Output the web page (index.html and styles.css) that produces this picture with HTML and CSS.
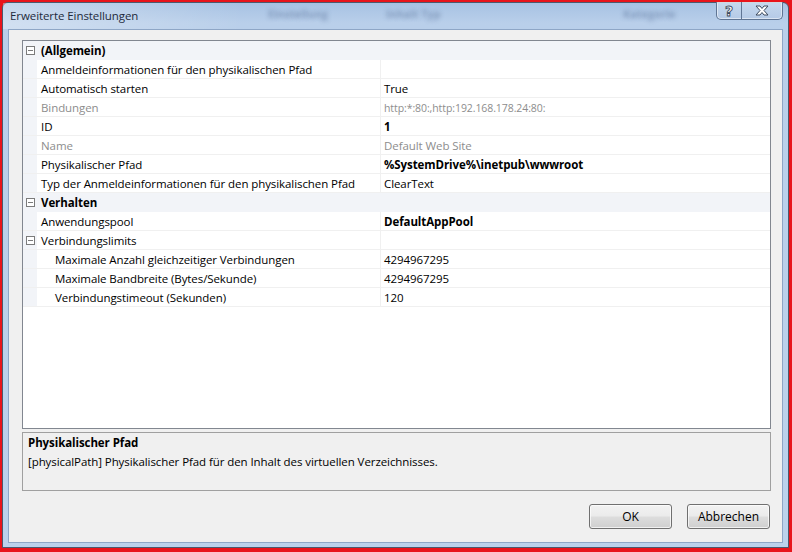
FILE: index.html
```html
<!DOCTYPE html>
<html lang="de">
<head>
    <meta charset="UTF-8">
    <title>Erweiterte Einstellungen</title>
    <link rel="stylesheet" href="styles.css">
</head>
<body>
    <div class="window">
        <div class="titlebar">
            <span class="title">Erweiterte Einstellungen</span>
            <span class="ghost ghost1">Einstellung</span>
            <span class="ghost ghost2">Inhalt Typ</span>
            <span class="ghost ghost3">Kategorie</span>
            <div class="caption-buttons">
                <div class="cap-btn help">
                    <svg width="24" height="17" viewBox="0 0 24 17">
                        <text x="12" y="13.5" text-anchor="middle" class="help-glyph">?</text>
                    </svg>
                </div>
                <div class="cap-btn close">
                    <svg width="40" height="17" viewBox="0 0 40 17">
                        <path d="M14 4 h4 l2 2.5 l2 -2.5 h4 l-4 4.5 l4 4.5 h-4 l-2 -2.5 l-2 2.5 h-4 l4 -4.5 z" fill="#fff" stroke="#3c4a5e" stroke-width="1" stroke-linejoin="round"/>
                    </svg>
                </div>
            </div>
        </div>

        <div class="client">
            <div class="grid">
                <div class="row cat">
                    <div class="gutter"><span class="exp"></span></div>
                    <div class="cat-label">(Allgemein)</div>
                </div>
                <div class="row">
                    <div class="gutter"></div>
                    <div class="name">Anmeldeinformationen für den physikalischen Pfad</div>
                    <div class="value"></div>
                </div>
                <div class="row">
                    <div class="gutter"></div>
                    <div class="name">Automatisch starten</div>
                    <div class="value">True</div>
                </div>
                <div class="row readonly">
                    <div class="gutter"></div>
                    <div class="name">Bindungen</div>
                    <div class="value small">http:*:80:,http:192.168.178.24:80:</div>
                </div>
                <div class="row">
                    <div class="gutter"></div>
                    <div class="name">ID</div>
                    <div class="value bold">1</div>
                </div>
                <div class="row readonly">
                    <div class="gutter"></div>
                    <div class="name">Name</div>
                    <div class="value">Default Web Site</div>
                </div>
                <div class="row">
                    <div class="gutter"></div>
                    <div class="name">Physikalischer Pfad</div>
                    <div class="value bold">%SystemDrive%\inetpub\wwwroot</div>
                </div>
                <div class="row">
                    <div class="gutter"></div>
                    <div class="name">Typ der Anmeldeinformationen für den physikalischen Pfad</div>
                    <div class="value">ClearText</div>
                </div>
                <div class="row cat">
                    <div class="gutter"><span class="exp"></span></div>
                    <div class="cat-label">Verhalten</div>
                </div>
                <div class="row">
                    <div class="gutter"></div>
                    <div class="name">Anwendungspool</div>
                    <div class="value bold">DefaultAppPool</div>
                </div>
                <div class="row">
                    <div class="gutter"><span class="exp"></span></div>
                    <div class="name">Verbindungslimits</div>
                    <div class="value"></div>
                </div>
                <div class="row">
                    <div class="gutter"></div>
                    <div class="name sub">Maximale Anzahl gleichzeitiger Verbindungen</div>
                    <div class="value">4294967295</div>
                </div>
                <div class="row">
                    <div class="gutter"></div>
                    <div class="name sub">Maximale Bandbreite (Bytes/Sekunde)</div>
                    <div class="value">4294967295</div>
                </div>
                <div class="row">
                    <div class="gutter"></div>
                    <div class="name sub">Verbindungstimeout (Sekunden)</div>
                    <div class="value">120</div>
                </div>
            </div>

            <div class="description">
                <div class="desc-title">Physikalischer Pfad</div>
                <div class="desc-text">[physicalPath] Physikalischer Pfad für den Inhalt des virtuellen Verzeichnisses.</div>
            </div>

            <div class="buttons">
                <button class="btn">OK</button>
                <button class="btn">Abbrechen</button>
            </div>
        </div>
    </div>
</body>
</html>
```

FILE: styles.css
```css
body {
    margin: 0;
    height: 552px;
    background-color: #e8141b;
    font-family: "Open Sans", "Noto Sans", sans-serif;
    font-size: 11.5px;
    letter-spacing: -0.08px;
    color: #000;
    overflow: hidden;
}

.window {
    margin: 2px 3px 0 2px;
    height: 546px;
    box-sizing: border-box;
    border: 1px solid #4b5a6e;
    border-radius: 6px 6px 0 0;
    background: linear-gradient(to bottom, #a7c2e3 0%, #b9cfea 20px, #bcd2ec 100%);
    display: flex;
    flex-direction: column;
}

.titlebar {
    position: relative;
    height: 26px;
    flex: none;
    background: linear-gradient(to right, rgba(255,255,255,0.35), rgba(255,255,255,0) 240px);
}

.title {
    position: absolute;
    left: 7px;
    top: 5px;
    color: #1e2b3c;
}

.ghost {
    position: absolute;
    top: 3px;
    color: transparent;
    text-shadow: 0 0 4px rgba(80, 105, 145, 0.45);
    font-weight: bold;
    font-size: 11px;
}
.ghost1 { left: 265px; }
.ghost2 { left: 383px; }
.ghost3 { left: 620px; }

.caption-buttons {
    position: absolute;
    top: -1px;
    right: 5px;
    display: flex;
    border: 1px solid #5f7594;
    border-top: none;
    border-radius: 0 0 5px 5px;
    background: linear-gradient(to bottom, rgba(220,232,246,0.6), rgba(180,200,228,0.5));
    box-shadow: inset 0 0 0 1px rgba(255,255,255,0.5);
}

.cap-btn {
    height: 17px;
    display: flex;
}

.help {
    border-right: 1px solid #5f7594;
}

.help-glyph {
    font-family: "DejaVu Sans", sans-serif;
    font-weight: bold;
    font-size: 14px;
    fill: #fff;
    stroke: #3c4a5e;
    stroke-width: 0.9;
}

.client {
    flex: 1;
    margin: 0 5px 4px 5px;
    border: 1px solid #8ea6c6;
    background-color: #f0f0f0;
    padding: 10px 11px 0 13px;
    display: flex;
    flex-direction: column;
}

.grid {
    height: 389px;
    box-sizing: border-box;
    border: 1px solid #828790;
    background-color: #fff;
}

.row {
    display: flex;
    height: 19px;
    box-sizing: border-box;
    border-bottom: 1px solid #f0f0f0;
    line-height: 18px;
    white-space: nowrap;
}

.row > .name,
.row > .value,
.row > .cat-label {
    padding-top: 1px;
}

.gutter {
    width: 14px;
    flex: none;
    background-color: #f2f4f8;
    display: flex;
    align-items: center;
    justify-content: center;
}

.exp {
    width: 7px;
    height: 7px;
    border: 1px solid #7b7b7b;
    background: linear-gradient(#7b7b7b, #7b7b7b) center / 5px 1px no-repeat, #fff;
}

.cat {
    background-color: #f2f4f8;
    border-bottom-color: #f2f4f8;
}

.cat-label {
    padding-left: 4px;
    font-weight: bold;
}

.name {
    width: 343px;
    flex: none;
    padding-left: 4px;
    box-sizing: border-box;
}

.name.sub {
    padding-left: 18px;
}

.value {
    flex: 1;
    border-left: 1px solid #f0f0f0;
    padding-left: 3px;
}

.value.bold {
    font-weight: bold;
}

.value.small {
    font-size: 10.5px;
}

.readonly .name,
.readonly .value {
    color: #8d8d8d;
}

.description {
    margin-top: 3px;
    height: 59px;
    box-sizing: border-box;
    border: 1px solid #a0a0a0;
    padding: 0 5px;
    line-height: 19px;
}

.desc-title {
    font-weight: bold;
}

.buttons {
    display: flex;
    justify-content: flex-end;
    gap: 15px;
    margin-top: 13px;
    padding-right: 1px;
}

.btn {
    width: 83px;
    height: 25px;
    border: 1px solid #707070;
    border-radius: 3px;
    background: linear-gradient(to bottom, #f2f2f2 0%, #ebebeb 48%, #dddddd 52%, #cfcfcf 100%);
    box-shadow: inset 0 0 0 1px rgba(255,255,255,0.7);
    font-family: "Open Sans", sans-serif;
    font-size: 12px;
    color: #000;
    cursor: pointer;
}
```
